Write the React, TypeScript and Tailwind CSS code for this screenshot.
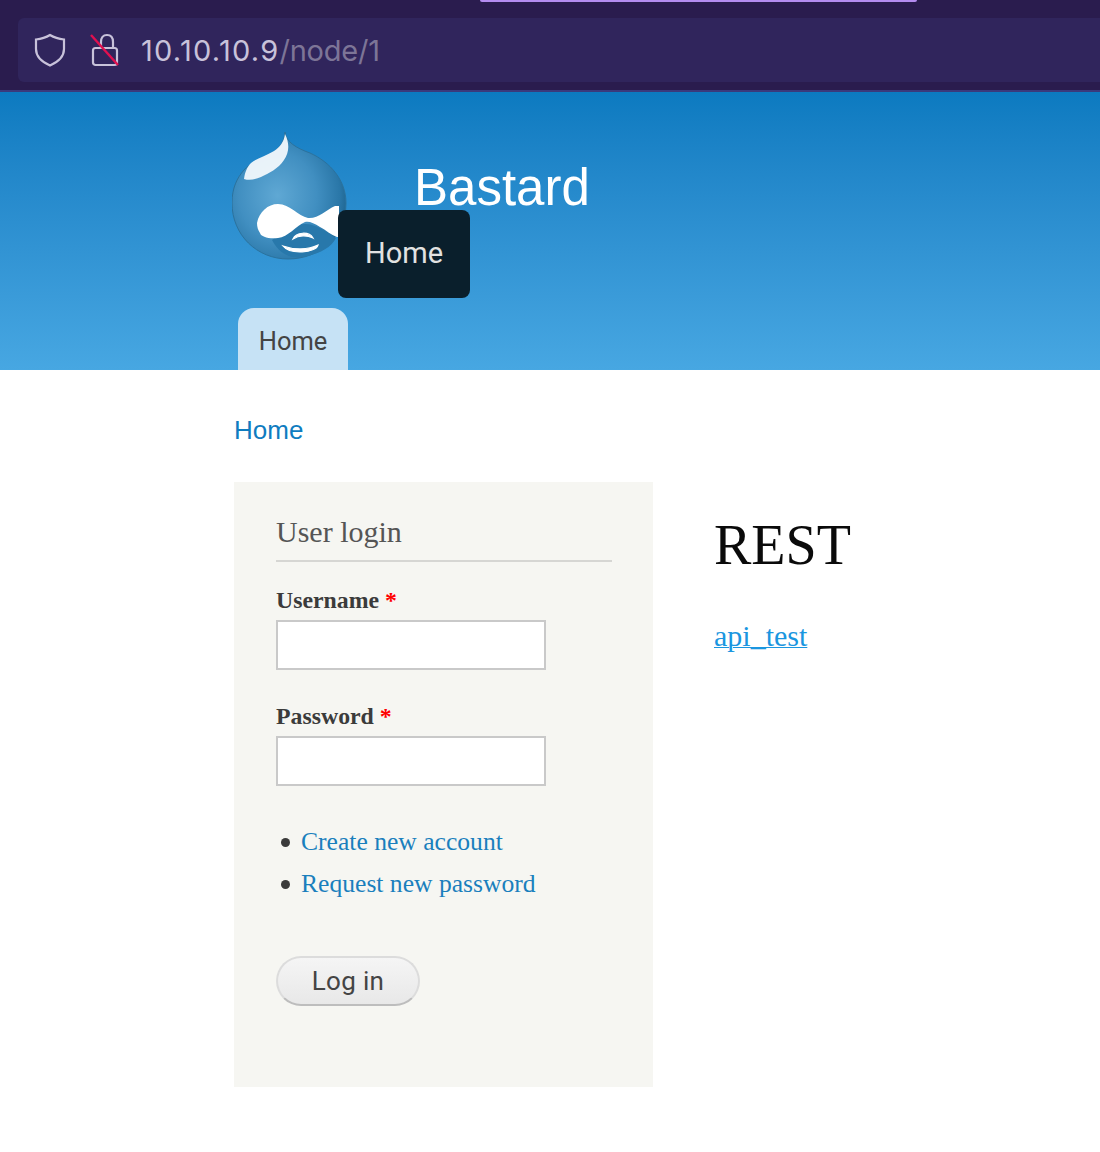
const serif = "font-['Liberation_Serif',serif]";
const sans = "font-['Liberation_Sans',sans-serif]";

function ShieldIcon() {
  return (
    <svg width="32" height="36" viewBox="0 0 32 36" fill="none" stroke="#c8c2da" strokeWidth="2.2" className="shrink-0">
      <path d="M16 3 C20 5.5 25 7 30 7.5 V17 C30 24.5 24 30 16 33.5 C8 30 2 24.5 2 17 V7.5 C7 7 12 5.5 16 3 Z" />
    </svg>
  );
}

function LockIcon() {
  return (
    <svg width="30" height="34" viewBox="0 0 30 34" fill="none" className="shrink-0">
      <path d="M11 15 V9 C11 5 13 2 17 2 C21 2 23 5 23 9 V15" stroke="#c8c2da" strokeWidth="2.2" />
      <rect x="3" y="15" width="24" height="17" rx="2.5" stroke="#c8c2da" strokeWidth="2.2" />
      <path d="M1 2 L28 32" stroke="#e0104f" strokeWidth="2.4" />
    </svg>
  );
}

function DrupalLogo() {
  return (
    <svg width="116" height="130" viewBox="0 0 116 130" className="shrink-0">
      <defs>
        <radialGradient id="drop" cx="0.4" cy="0.5" r="0.62">
          <stop offset="0" stopColor="#5fa8d4" />
          <stop offset="0.55" stopColor="#418fc1" />
          <stop offset="0.88" stopColor="#2a77a8" />
          <stop offset="1" stopColor="#1f6590" />
        </radialGradient>
      </defs>
      <path
        d="M53 0 C54 10 64 16 78 21 C98 30 114 48 114 71 C114 104 88 127 56 127 C25 127 0 103 0 71 C0 56 5 46 12 38 C24 25 52 24 53 0 Z"
        fill="url(#drop)"
        stroke="#2b729d"
        strokeWidth="1"
      />
      <path d="M53 2 C52 10 48 15 42 19 C34 24 25 26 19 31 C15 35 13 40 12 47 C18 49 24 47 29 45 C37 41 46 37 52 28 C57 21 58 12 53 2 Z" fill="#f2f8fc" opacity="0.95" />
      <path d="M40 108 C52 100 62 92 73 92 C84 92 94 100 104 106 C98 118 80 126 60 125 C50 122 44 116 40 108 Z" fill="#2878ab" />
      <path
        d="M25 91 C27 80 36 72 46 72 C58 72 66 84 76 86 C86 87 94 78 103 74 L107 74 L107 105 L105 105 C99 103 94 98 88 95 C82 91 77 89 73 90 C64 94 56 105 46 106 C37 107 29 105 28 101 C26 98 25 95 25 91 Z"
        fill="#ffffff"
      />
      <path d="M61 107 C64 100 77 99 81 106 C75 103 67 103 61 107 Z" fill="#ffffff" stroke="#ffffff" strokeWidth="1.2" />
      <path d="M51 114 C62 118 76 118 86 113 C84 121 58 123 51 114 Z" fill="#ffffff" stroke="#ffffff" strokeWidth="1.2" />
    </svg>
  );
}

function Field({ label, gap }: { label: string; gap: string }) {
  return (
    <div className={gap}>
      <label className="block text-[23.8px] leading-[28px] font-bold text-[#3b3b3b]">
        {label} <span className="text-[#ff0000]">*</span>
      </label>
      <input type="text" className="mt-[6px] block h-[50px] w-[270px] border-2 border-[#c9c9c9] bg-white" />
    </div>
  );
}

export default function App() {
  return (
    <div className="min-h-[1152px] w-[1100px] overflow-hidden bg-white">
      {/* Browser url bar */}
      <div className="relative h-[92px] border-b-2 border-[#3a3a7c] bg-[#2a1c4e] pt-[18px] pl-[18px]">
        <div className="absolute top-0 left-[480px] h-[2px] w-[437px] rounded-b-sm bg-[#b48cf0]" />
        <div className="flex h-[64px] items-center rounded-l-md bg-[#30255c] pl-[16px]">
          <ShieldIcon />
          <div className="ml-[24px]">
            <LockIcon />
          </div>
          <div className="mt-[2px] ml-[21px] font-['Inter',sans-serif] text-[29px] tracking-[1.25px] text-[#c8c2da]">
            10.10.10.9<span className="tracking-[-0.2px] text-[#7d7597]">/node/1</span>
          </div>
        </div>
      </div>

      {/* Site header */}
      <div className="relative h-[278px] bg-gradient-to-b from-[#0b7ac0] to-[#47a7e2] pl-[232px]">
        <div className="flex pt-[40px]">
          <DrupalLogo />
          <div className={`ml-[66px] pt-[27px] text-[51px] leading-[58px] text-white ${sans}`}>Bastard</div>
        </div>
        <div className="absolute top-[118px] left-[338px] flex h-[88px] w-[132px] items-center justify-center rounded-lg bg-[#0a1f2c] font-['Roboto',sans-serif] text-[29px] text-[#e2e2e2]">
          Home
        </div>
        <div className="absolute bottom-0 left-[238px] flex h-[62px] w-[110px] items-center justify-center rounded-t-2xl bg-[#c6e2f5] pt-[4px] font-['Roboto',sans-serif] text-[25.5px] text-[#444444]">
          Home
        </div>
      </div>

      {/* Page body */}
      <div className="px-[234px] pt-[45px]">
        <div className={`text-[26px] leading-[30px] text-[#0f7cc0] ${sans}`}>Home</div>
        <div className={`mt-[37px] flex ${serif}`}>
          <aside className="h-[605px] w-[419px] shrink-0 bg-[#f6f6f2] pt-[33px] pr-[41px] pl-[42px]">
            <h2 className="border-b-2 border-[#d6d6d3] pb-[11px] text-[30px] leading-[34px] text-[#555555]">User login</h2>
            <Field label="Username" gap="mt-[24px]" />
            <Field label="Password" gap="mt-[32px]" />
            <ul className="mt-[41px] text-[25.6px] leading-[30px] text-[#1a7fbd]">
              <li className="flex items-center">
                <span className="mr-[11px] ml-[5px] h-[9px] w-[9px] rounded-full bg-[#3b3b3b]" />
                Create new account
              </li>
              <li className="mt-[12px] flex items-center">
                <span className="mr-[11px] ml-[5px] h-[9px] w-[9px] rounded-full bg-[#3b3b3b]" />
                Request new password
              </li>
            </ul>
            <button className="mt-[57px] h-[50px] w-[144px] rounded-[25px] border-2 border-[#dcdcdc] border-b-[#bdbdbd] bg-gradient-to-b from-[#f5f5f5] to-[#e8e8e8] font-['Roboto',sans-serif] text-[26px] tracking-[0.3px] text-[#444444]">
              Log in
            </button>
          </aside>
          <main className="ml-[61px] pt-[32px]">
            <h1 className="text-[56px] leading-[62px] whitespace-nowrap text-[#0a0a0a]">REST</h1>
            <a className="mt-[43px] block text-[30px] leading-[34px] text-[#1a96e0] underline decoration-1">api_test</a>
          </main>
        </div>
      </div>
    </div>
  );
}
